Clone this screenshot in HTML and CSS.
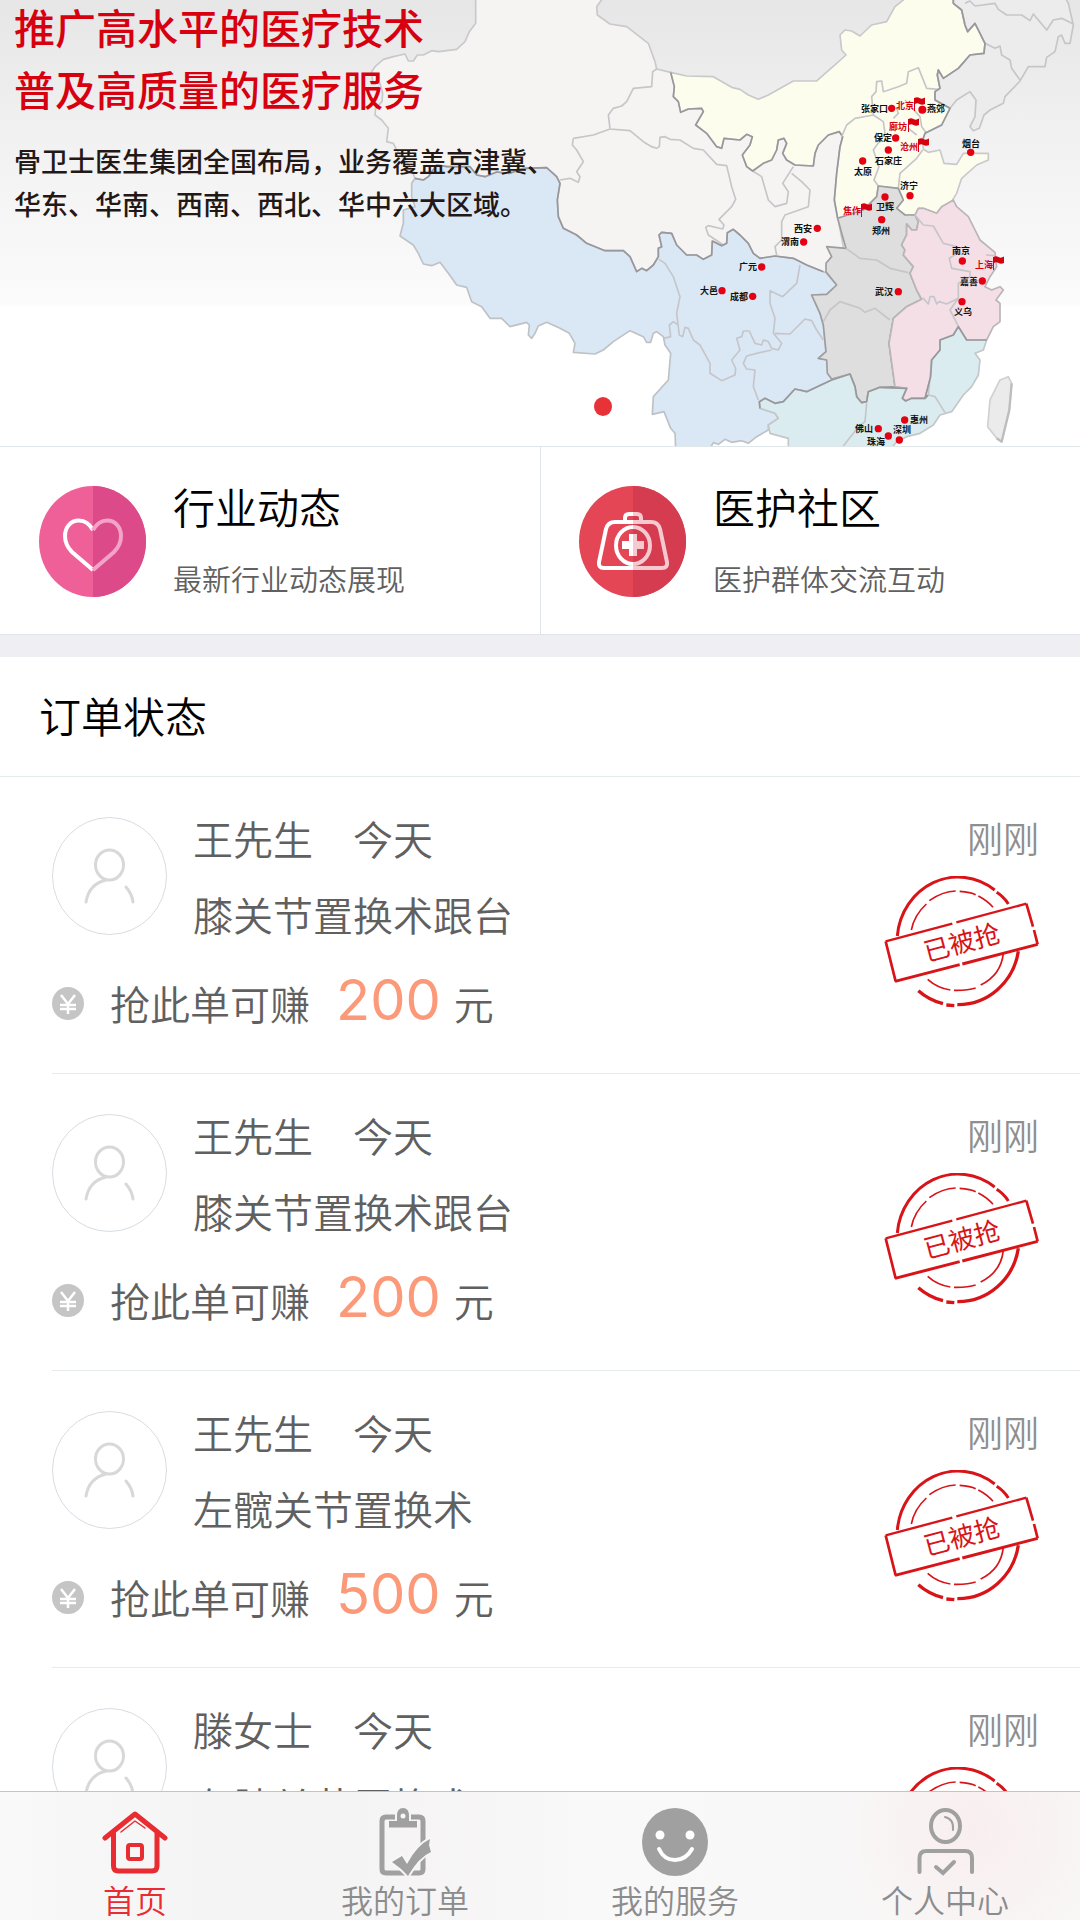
FILE: index.html
```html
<!DOCTYPE html>
<html lang="zh-CN">
<head>
<meta charset="utf-8">
<meta name="viewport" content="width=device-width, initial-scale=1">
<title>首页</title>
<link rel="stylesheet" href="styles.css">
</head>
<body>
<svg class="sprite" aria-hidden="true">
  <defs>
    <symbol id="flag" viewBox="0 0 11 14"><path d="M.5 14V1" stroke="#d7000f" fill="none"/><path d="M.5 1Q3-.5 5.500 1T11 .5V7Q8 8.500 5.500 7T.5 7.500Z" fill="#d7000f"/></symbol>
    <symbol id="avatar" viewBox="0 0 115 118">
      <ellipse cx="57.5" cy="59" rx="57" ry="58.500" fill="#fff" stroke="#d6dde3"/>
      <g fill="none" stroke="#d8d8d8" stroke-width="3" stroke-linecap="round"><ellipse cx="57.500" cy="48" rx="14" ry="15"/><path d="M54 63Q37 67 34 85M74 70Q80 77 81 85"/></g>
    </symbol>
    <symbol id="coin" viewBox="0 0 32 33">
      <ellipse cx="16" cy="16.500" rx="16" ry="16.500" fill="#c6c5c5"/>
      <path d="M9 8l7 9 7-9M16 17v10M8 18h16M8 22h16" fill="none" stroke="#fff" stroke-width="2.500"/>
    </symbol>
    <symbol id="stamp" viewBox="135 288 465 396">
      <g fill="none" stroke="#d81419">
        <path d="M175 468A183 194 0 0 1 467 330M473 337Q494 350 508 372" stroke-width="9"/>
        <path d="M538 514A183 190 0 0 1 355 674M346 677L322 675M312 671Q270 660 238 632" stroke-width="10"/>
        <path d="M217 450Q226 405 262 372M271 362Q310 334 350 333M362 334Q395 336 410 344M418 348Q445 362 462 382" stroke-width="5"/>
        <path d="M493 520Q486 585 425 615M410 624Q385 632 345 631M334 630Q295 624 266 598" stroke-width="5"/>
      </g>
      <path d="M140 484L562 371L596 493L170 604Z" fill="#fff"/>
      <g fill="none" stroke="#d81419"><path d="M140 484L340 431M352 427L562 371" stroke-width="7"/><path d="M562 371L582 440M585 450L596 493M140 484L170 604" stroke-width="8"/><path d="M596 493L370 552M362 554L168 604" stroke-width="9"/></g>
    </symbol>
  </defs>
</svg>

<div class="app">
  <main class="content">
    <section class="banner">
      <svg class="map" viewBox="0 0 1080 446" aria-hidden="true">
        <g stroke-linejoin="round" stroke-width="5" transform="translate(360) scale(.33333)">
          <path class="land" stroke="#c9c9cb" d="M347-8V70L328 95 315 125 290 148 235 155 215 152 190 165 172 165 160 183 145 183 135 162 100 170 70 178 45 200 35 215 38 245 60 250 68 280 66 305 47 325 45 345 65 360 85 385 80 425 100 430 110 450 150 500 165 535 600 700 900 850 1200 800 1398 820 1450 740 1433 650 1448 395 932 217 890 207 885 185 865 130 800 80 750 72 712 45 710 20 730-8Z"/>
          <path class="line" d="M890 207L878 215 875 260 820 265 800 305 785 318 760 325 745 345 750 385M640 415L700 405 750 387 810 392 850 425 875 440 890 445 898 440 900 412 915 410 930 418 960 420 1000 445 1030 450 1070 493 1100 497 1115 560 1127 598 1115 620 1077 658 1092 675 1088 687 1045 677 1037 682 1045 705 1090 735M640 415L637 435 650 450 670 485 650 515 660 530 655 547 630 535 600 540"/>
          <path class="line" d="M1178 513L1205 530 1225 600 1245 620 1280 610 1285 575 1268 550 1300 500M1295 520L1325 545 1350 570 1345 620 1275 645 1265 665 1265 720 1245 740 1250 765"/>
          <path fill="#dae7f5" stroke="#bfc2c5" d="M155 550L155 590 165 620 130 630 130 670 120 708 160 735 175 760 190 792 215 797 240 787 265 820 290 855 320 862 335 905 365 920 390 955 425 955 450 980 500 967 508 975 505 1005 515 1015 525 1000 535 978 560 967 600 985 628 1000 645 1030 640 1057 705 1062 730 1050 760 1025 810 992 850 1010 860 1027 872 1027 880 1000 890 995 910 1010 915 1035 932 1060 925 1140 880 1190 877 1243 912 1235 932 1285 945 1300 947 1345H1050L1060 1328 1075 1333 1095 1318 1115 1327 1145 1322 1165 1330 1190 1310 1225 1290 1225 1275 1255 1255 1245 1240 1200 1225 1200 1205 1215 1195 1245 1210 1270 1205 1305 1167 1340 1175 1415 1140 1405 1080 1375 1075 1398 1055 1390 975 1380 940 1355 885 1400 883 1430 855 1398 818 1340 795 1300 775 1245 768 1200 775 1180 760 1165 730 1140 705 1120 688 1102 698 1100 730 1085 737 1057 723 1055 765 1030 778 1010 765 980 765 950 735 935 700 905 697 897 705 905 740 895 745 895 770 880 795 860 812 845 805 830 815 810 770 790 752 735 752 680 730 650 705 610 685 595 650 592 600 600 550 590 530 560 503 490 505 450 520 410 516 375 530 350 525 330 500 262 500 230 495 205 530 190 540 165 535Z"/>
          <path class="dark" d="M165 535L190 540 205 530 230 495 262 500 330 500 350 525 375 530 410 516 450 520 490 505 560 503 590 530 600 550 592 600 595 650 610 685 650 705 680 730 735 752 790 752 810 770 830 815 845 805 860 812 880 795 895 770 895 745 905 740 897 705 905 697 935 700 950 735 980 765 1010 765 1030 778 1055 765 1057 723 1085 737 1100 730 1102 698 1120 688 1140 705 1165 730 1180 760 1200 775 1245 768 1300 775 1340 795 1390 815"/>
          <path class="line" d="M897 778L915 790 940 830 960 890 950 940 958 1005 968 1010 975 982 985 985 1000 1020 1020 1035 1050 1090 1050 1120 1085 1142 1125 1125 1127 1105 1115 1080 1140 1050 1130 1015 1145 1010 1150 993 1168 993 1185 1030 1205 1035 1210 1020 1225 1025 1235 1045 1255 1050 1265 1030 1240 1000 1245 955 1230 910 1230 872 1268 890 1310 850 1320 795M955 975L940 965 928 975 932 1010 912 1015M1245 1000L1290 1002 1335 957 1355 962 1370 990 1390 1020M1235 1050L1190 1060 1160 1068 1150 1090 1160 1107 1185 1110 1180 1160 1195 1200"/>
          <path fill="#fdfdee" stroke="#c9c9cb" d="M932 217L980 228 1060 230 1115 262 1140 268 1165 285 1195 298 1225 285 1300 243 1370 243 1430 190 1458 165 1445 150 1440 105 1455 90 1475 93 1500 108 1535 75 1580 65 1605 20 1640-8H1780L1780 10 1805 30 1815 75 1823 95 1845 70 1860 100 1875 130 1872 160 1830 165 1795 205 1750 235 1735 210 1732 225 1740 265 1725 275 1725 300 1770 325 1745 375 1695 400 1688 420 1690 448 1705 457 1740 450 1752 490 1790 493 1810 460 1885 460 1885 480 1850 495 1805 535 1790 580 1775 605 1745 620 1730 640 1690 625 1675 625 1665 645 1635 645 1610 625 1630 600 1615 565 1555 558 1550 590 1510 630 1433 655 1423 600 1430 520 1440 440 1448 410 1438 395 1405 405 1375 435 1365 460 1360 498 1305 495 1280 480 1268 460 1280 430 1272 415 1255 420 1250 450 1235 480 1210 490 1178 513 1160 500 1147 465 1170 435 1177 410 1160 403 1140 420 1092 415 1085 445 1070 440 1040 400 1007 375 1030 335 1025 325 985 327 962 337 955 305 940 290 943 260Z"/>
          <path class="dark" d="M932 217L943 260 940 290 955 305 962 337 985 327 1025 325 1030 335 1007 375 1040 400 1070 440 1085 445 1092 415 1140 420 1160 403 1177 410 1170 435 1147 465 1160 500 1178 513 1210 490 1235 480 1250 450 1255 420 1272 415 1280 430 1268 460 1280 480 1305 495 1360 498 1365 460 1375 435 1405 405 1438 395 1448 410 1440 440 1430 520 1423 600 1433 655"/>
        </g>
        <g stroke-linejoin="round" stroke-width="5" transform="translate(740) scale(.33333)">
          <path fill="#ececec" stroke="#c6c6c8" d="M640-8V10L665 30 675 75 683 95 705 70 720 100 735 130 732 160 690 165 655 205 610 235 595 210 592 225 600 265 585 275 585 300 630 325 650 300 690 275 708 300 705 350 690 380 700 392 718 385 732 345 750 330 790 310 795 290 840 243 865 200 915 200 920 172 945 155 955 110 965 105 975 130 990 130 1000 75 985 10 975-8Z"/>
          <path class="line" d="M735 130L765 145 780 138 785 165 810 180 815 205 840 240M675 10L690 3 705 18 765 10 775 28 800 45 845 45 870 62 880 42 920 90 940 60 965 55 1000 72M305 410L320 375 345 355 400 345 430 365 435 400 400 450 417 500 402 540 415 558M400 345L395 290 408 275 410 245 425 243 430 275 475 260 500 250 505 215 535 203 560 265 595 268M475 565L480 520 530 475 548 450M460 355L475 340 470 325M495 300L540 350 545 380 560 400M505 385L530 405"/>
          <path class="dark" d="M640 0V10L665 30 675 75 683 95 705 70 720 100 735 130 732 160 690 165 655 205 610 235 595 210 592 225 600 265 585 275 585 300 630 325 605 375 555 400 548 420"/>
          <path fill="#dedede" stroke="#9d9d9f" d="M415 558L475 565 490 600 470 625 495 645 525 645 535 665 530 690 515 690 500 672 500 705 485 735 495 750 490 765 520 800 510 820 530 870 545 898 500 920 460 955 447 1030 465 1160 420 1162 385 1175 380 1205 365 1208 350 1190 345 1160 330 1122 275 1137 262 1120 260 1080 235 1075 258 1055 250 975 240 940 215 885 260 883 290 855 258 815 258 790 275 770 260 740 318 745 305 700 293 655 370 630 410 590Z"/>
          <path class="line" d="M318 745L360 775 410 780 450 805 505 818M250 965L270 930 300 905 360 925 375 937 405 925 450 960"/>
          <path fill="#f5dfe7" stroke="#b9b5b8" d="M525 645L535 625 550 625 590 640 605 620 640 600 650 620 685 650 720 720 765 757 770 800 750 830 735 860 755 870 780 860 790 870 768 900 780 910 780 965 760 980 740 1020 700 1025 680 1020 655 980 640 1005 600 1020 600 1050 575 1080 572 1130 555 1195 515 1195 497 1203 487 1195 500 1165 465 1160 447 1030 460 955 500 920 545 898 530 870 510 820 520 800 490 765 495 750 485 735 500 705 500 672 515 690 530 690 535 665Z"/>
          <path class="line" d="M525 645L550 675 580 678 610 730 650 740 652 760 628 775 635 805 690 815 690 830 655 850 655 895 620 912 598 905 590 912 582 890 570 890 565 912 548 893M655 895L630 930 648 965 655 980M765 767L738 765"/>
          <path fill="#daecf0" stroke="#c3c7c8" d="M60 1225L58 1205 75 1195 105 1210 130 1205 165 1167 200 1175 275 1140 330 1122 345 1160 350 1190 365 1208 380 1205 385 1175 420 1162 500 1165 487 1195 497 1203 515 1195 555 1195 565 1185 575 1080 600 1050 600 1020 640 1005 655 980 680 1020 740 1020 730 1050 705 1060 720 1080 715 1125 695 1160 670 1185 635 1235 600 1245 580 1275 540 1300 500 1310 470 1325 455 1345H145L145 1315 90 1300 85 1275 115 1255 105 1240Z"/>
          <path class="dark" d="M60 1225L58 1205 75 1195 105 1210 130 1205 165 1167 200 1175 275 1140 330 1122 345 1160 350 1190 365 1208 380 1205 385 1175 420 1162 500 1165 487 1195 497 1203 515 1195 555 1195 565 1185M555 1195L572 1130 575 1080 600 1050 600 1020 640 1005 655 980 680 1020 740 1020"/>
          <path class="line" d="M380 1210L375 1265 355 1280 310 1338M565 1185L585 1190 615 1238"/>
          <path fill="#ebebeb" stroke="#d0d0d0" d="M805 1130L815 1150 808 1230 785 1325 770 1315 743 1280 750 1200 780 1140Z"/>
          <path d="M815 1150L808 1230 785 1325 770 1315" fill="none" stroke="#bdbdbd" stroke-width="7"/>
          <g fill="#e50012">
            <circle cx="455" cy="325" r="11"/><circle cx="547" cy="329" r="12"/><circle cx="467" cy="414" r="11"/><circle cx="445" cy="450" r="11"/><circle cx="368" cy="483" r="11"/><circle cx="692" cy="457" r="11"/><circle cx="510" cy="587" r="11"/><circle cx="435" cy="591" r="11"/><circle cx="425" cy="659" r="11"/><circle cx="232" cy="685" r="11"/><circle cx="191" cy="726" r="11"/><circle cx="65" cy="801" r="11"/><circle cx="38" cy="889" r="11"/><circle cx="-54" cy="872" r="11"/><circle cx="667" cy="783" r="11"/><circle cx="727" cy="843" r="11"/><circle cx="666" cy="905" r="11"/><circle cx="475" cy="875" r="11"/><circle cx="415" cy="1286" r="11"/><circle cx="494" cy="1260" r="11"/><circle cx="478" cy="1320" r="11"/><circle cx="445" cy="1308" r="11"/>
          </g>
        </g>
        <use href="#flag" x="914" y="97" width="11" height="14"/><use href="#flag" x="908" y="118" width="11" height="14"/><use href="#flag" x="918" y="138" width="11" height="14"/><use href="#flag" x="861" y="203" width="11" height="14"/><use href="#flag" x="993" y="256" width="11" height="14"/>
        <g class="city">
          <text x="861" y="112">张家口</text><text x="927" y="112">燕郊</text><text x="874" y="141">保定</text><text x="875" y="164">石家庄</text><text x="854" y="175">太原</text><text x="962" y="147">烟台</text><text x="900" y="189">济宁</text><text x="876" y="210">卫辉</text><text x="872" y="234">郑州</text><text x="794" y="232">西安</text><text x="781" y="245">渭南</text><text x="739" y="270">广元</text><text x="730" y="300">成都</text><text x="700" y="294">大邑</text><text x="952" y="254">南京</text><text x="960" y="285">嘉善</text><text x="954" y="315">义乌</text><text x="875" y="295">武汉</text><text x="855" y="432">佛山</text><text x="910" y="423">惠州</text><text x="893" y="433">深圳</text><text x="867" y="445">珠海</text>
        </g>
        <g class="city city-main">
          <text x="896" y="109">北京</text><text x="889" y="130">廊坊</text><text x="900" y="150">沧州</text><text x="843" y="214">焦作</text><text x="975" y="268">上海</text>
        </g>
      </svg>
      <div class="banner-copy">
        <h1>推广高水平的医疗技术<br>普及高质量的医疗服务</h1>
        <p>骨卫士医生集团全国布局，业务覆盖京津冀、<br>华东、华南、西南、西北、华中六大区域。</p>
      </div>
      <div class="dots"><i></i><i></i><i></i><i class="on"></i></div>
    </section>

    <nav class="entries">
      <a class="entry" href="#news">
        <svg class="entry-icon" viewBox="0 0 107 111" aria-hidden="true">
          <ellipse cx="53.500" cy="55.500" rx="53.500" ry="55.500" fill="#f06098"/><path d="M54 0A53 55.500 0 0 1 54 111Z" fill="#dc4a8a"/>
          <g fill="none" stroke="#fff" stroke-width="4"><path d="M54 44C50 37 45 34.500 40 34.500C31 34.500 26 42 26 50C26 57 29 62 33 66L54 84"/><path d="M54 44C58 37 63 34.500 68 34.500C77 34.500 82 42 82 50C82 57 79 62 75 66L54 84" stroke="#f4a3c8"/></g>
        </svg>
        <span class="entry-text"><strong>行业动态</strong><small>最新行业动态展现</small></span>
      </a>
      <a class="entry" href="#community">
        <svg class="entry-icon" viewBox="0 0 107 111" aria-hidden="true">
          <ellipse cx="53.500" cy="55.500" rx="53.500" ry="55.500" fill="#e54655"/><path d="M54 0A53 55.500 0 0 1 54 111Z" fill="#d63c4f"/>
          <g fill="none" stroke="#fff" stroke-width="4"><path d="M54 36H36Q29 36 27 43L20 76Q19 82 25 82H54M46 36V32Q46 28 50 28H54M54 41A17 18.500 0 0 0 54 78"/><path stroke="#f5c9d0" d="M54 36H72Q79 36 81 43L88 76Q89 82 83 82H54M62 36V32Q62 28 58 28H54M54 41A17 18.500 0 0 1 54 78"/></g>
          <path d="M54 48H50V55H43V63H50V70H54Z" fill="#fff"/><path d="M54 48H58V55H65V63H58V70H54Z" fill="#f5c9d0"/>
        </svg>
        <span class="entry-text"><strong>医护社区</strong><small>医护群体交流互动</small></span>
      </a>
    </nav>

    <section class="orders">
      <h2>订单状态</h2>
      <ul>
        <li class="order">
          <div class="order-head">
            <svg class="avatar" aria-hidden="true"><use href="#avatar"/></svg>
            <div class="order-info"><p>王先生　今天</p><p>膝关节置换术跟台</p></div>
            <div class="order-state"><time>刚刚</time><svg class="stamp" viewBox="0 0 155 132"><use href="#stamp" width="155" height="132"/><text x="78" y="76" transform="rotate(-15 78 67)">已被抢</text></svg></div>
          </div>
          <p class="reward"><svg class="coin" aria-hidden="true"><use href="#coin"/></svg><span>抢此单可赚</span><b>200</b><span>元</span></p>
        </li>
        <li class="order">
          <div class="order-head">
            <svg class="avatar" aria-hidden="true"><use href="#avatar"/></svg>
            <div class="order-info"><p>王先生　今天</p><p>膝关节置换术跟台</p></div>
            <div class="order-state"><time>刚刚</time><svg class="stamp" viewBox="0 0 155 132"><use href="#stamp" width="155" height="132"/><text x="78" y="76" transform="rotate(-15 78 67)">已被抢</text></svg></div>
          </div>
          <p class="reward"><svg class="coin" aria-hidden="true"><use href="#coin"/></svg><span>抢此单可赚</span><b>200</b><span>元</span></p>
        </li>
        <li class="order">
          <div class="order-head">
            <svg class="avatar" aria-hidden="true"><use href="#avatar"/></svg>
            <div class="order-info"><p>王先生　今天</p><p>左髋关节置换术</p></div>
            <div class="order-state"><time>刚刚</time><svg class="stamp" viewBox="0 0 155 132"><use href="#stamp" width="155" height="132"/><text x="78" y="76" transform="rotate(-15 78 67)">已被抢</text></svg></div>
          </div>
          <p class="reward"><svg class="coin" aria-hidden="true"><use href="#coin"/></svg><span>抢此单可赚</span><b>500</b><span>元</span></p>
        </li>
        <li class="order">
          <div class="order-head">
            <svg class="avatar" aria-hidden="true"><use href="#avatar"/></svg>
            <div class="order-info"><p>滕女士　今天</p><p>左膝关节置换术</p></div>
            <div class="order-state"><time>刚刚</time><svg class="stamp" viewBox="0 0 155 132"><use href="#stamp" width="155" height="132"/></svg></div>
          </div>
        </li>
      </ul>
    </section>
  </main>

  <nav class="tabs">
    <a class="tab active" href="#home">
      <svg viewBox="0 0 66 68" fill="none" stroke="currentColor" stroke-linecap="round" stroke-linejoin="round" aria-hidden="true"><path d="M3 30L33 6L63 30M11.500 25V58Q11.500 63 16.500 63H50Q55 63 55 58V25" stroke-width="5"/><rect x="26" y="37" width="14" height="14" rx="2" stroke-width="4"/><path d="M19 24L33 13L43 20" stroke-width="1.500"/></svg>
      <span>首页</span>
    </a>
    <a class="tab" href="#orders">
      <svg viewBox="0 0 66 68" aria-hidden="true"><path d="M23 9H14Q10 9 10 13V61Q10 65 14 65H47Q51 65 51 61V13Q51 9 47 9H39" fill="none" stroke="currentColor" stroke-width="5"/><path d="M17 13H25V8Q25 0 31 0T37 8V13H45V19.500H17Z" fill="currentColor"/><circle cx="31" cy="8" r="2.500" fill="#f7f7f7"/><path d="M20 54L30 48 35 56Q45 37 58 31L57 37 59 44Q47 49 36 68Q29 60 20 54Z" fill="currentColor" stroke="#f7f7f7" stroke-width="4" paint-order="stroke"/></svg>
      <span>我的订单</span>
    </a>
    <a class="tab" href="#services">
      <svg viewBox="0 0 66 68" aria-hidden="true"><ellipse cx="33" cy="34" rx="33" ry="34" fill="currentColor"/><circle cx="18" cy="27" r="4.500" fill="#fff"/><circle cx="48" cy="27" r="4.500" fill="#fff"/><path d="M17 41Q22 52 33 52T50 41" fill="none" stroke="#fff" stroke-width="4" stroke-linecap="round"/></svg>
      <span>我的服务</span>
    </a>
    <a class="tab" href="#me">
      <svg viewBox="0 0 66 68" fill="none" stroke="currentColor" stroke-width="4" stroke-linecap="round" aria-hidden="true"><ellipse cx="33.500" cy="18" rx="14.500" ry="16"/><path d="M7.500 64V50Q7.500 43 14.500 43H53Q60 43 60 50V64M24 59L31 65L42 54"/><path d="M33 9Q42 11 41 22" stroke-width="2"/></svg>
      <span>个人中心</span>
    </a>
  </nav>
</div>
</body>
</html>
```

FILE: styles.css
```css
* { box-sizing: border-box; }

body, h1, h2, p, ul { margin: 0; padding: 0; }

body {
  background: #fff;
  color: #606060;
  font-family: "Noto Sans CJK SC", sans-serif;
  font-weight: 350;
}

ul { list-style: none; }
a { color: inherit; text-decoration: none; }
svg { display: block; flex: none; }
.sprite { position: absolute; width: 0; height: 0; }

.app {
  display: flex;
  flex-direction: column;
  height: 100vh;
}

.content {
  flex: 1;
  min-height: 0;
  overflow-y: auto;
  scrollbar-width: none;
}

/* Banner */
.banner {
  position: relative;
  display: flow-root;
  aspect-ratio: 1080 / 446;
  overflow: hidden;
  background: linear-gradient(#e6e6e6, #f1f1f1 30%, #fbfbfb 68%, #fff 69%);
}

.map {
  position: absolute;
  inset: 0;
  width: 100%;
  height: 100%;
}

.map .land { fill: #f5f4f2; }
.map .line { fill: none; stroke: #c6c6ca; stroke-width: 5; }
.map .dark { fill: none; stroke: #98989c; stroke-width: 5; }
.city { fill: #111; font-size: 9px; font-weight: 700; }
.city-main { fill: #d7000f; }

.banner-copy {
  position: relative;
  margin-top: -5px;
  padding-left: 14px;
}

.banner-copy h1 {
  color: #d7000f;
  font-size: 41px;
  font-weight: 500;
  line-height: 62px;
}

.banner-copy p {
  margin-top: 20px;
  color: #231815;
  font-size: 27px;
  font-weight: 500;
  line-height: 43px;
}

.dots {
  position: absolute;
  right: 0;
  bottom: 30px;
  left: 0;
  display: flex;
  justify-content: center;
  gap: 24px;
}

.dots i {
  width: 18px;
  height: 19px;
  border-radius: 50%;
  background: #fff;
}

.dots .on { background: #e73237; }

/* Entries */
.entries {
  display: grid;
  grid-template-columns: 1fr 1fr;
  border-top: 1px solid #dfe6e9;
  border-bottom: 1px solid #dfe6e9;
}

.entry {
  display: flex;
  align-items: center;
  gap: 27px;
  padding: 27px 39px 26px;
}

.entry + .entry { padding-left: 38px; border-left: 1px solid #dfe6e9; }
.entry-icon { width: 107px; height: 111px; }

.entry-text {
  display: flex;
  flex-direction: column;
  gap: 15px;
  padding-bottom: 5px;
}

.entry strong {
  color: #000;
  font-size: 42px;
  font-weight: 350;
  line-height: 64px;
}

.entry small {
  font-size: 29px;
  line-height: 50px;
}

/* Orders */
.orders { border-top: 22px solid #eeeef3; }

.orders h2 {
  padding: 0 39px 4px;
  border-bottom: 1px solid #e5eaed;
  color: #000;
  font-size: 42px;
  font-weight: 350;
  line-height: 115px;
}

.order {
  margin-left: 52px;
  padding: 37px 41px 43px 0;
  border-bottom: 1px solid #e5eaed;
}

.order-head {
  display: flex;
  height: 124px;
}

.avatar { width: 115px; height: 118px; margin-top: 3px; }

.order-info {
  display: flex;
  flex: 1;
  flex-direction: column;
  gap: 28px;
  padding-left: 26px;
  font-size: 40px;
  line-height: 48px;
}

.order-state {
  display: flex;
  flex-direction: column;
  align-items: flex-end;
  gap: 16px;
}

.order-state time {
  color: #8f8f8f;
  font-size: 36px;
  line-height: 46px;
}

.stamp { width: 155px; height: 132px; }

.stamp text {
  fill: #d81419;
  font-size: 26px;
  font-weight: 400;
  text-anchor: middle;
}

.reward {
  display: flex;
  align-items: baseline;
  height: 60px;
  margin-top: 32px;
  font-size: 40px;
  line-height: 60px;
}

.coin {
  width: 32px;
  height: 33px;
  margin-right: 26px;
}

.reward b {
  margin: 0 13px 0 26px;
  color: #fb9978;
  font-family: Inter, sans-serif;
  font-size: 56px;
  font-weight: 400;
}

/* Tab bar */
.tabs {
  display: grid;
  grid-template-columns: repeat(4, 1fr);
  border-top: 1px solid #c4c4c4;
  background: radial-gradient(circle at 90% 30%, #f9eeef, transparent 14%), linear-gradient(90deg, #f9f9f9, #f4f4f4 20%, #f6f4f4 38%, #f9f9f9 55%, #f8f6f6);
}

.tab {
  display: flex;
  flex-direction: column;
  align-items: center;
  gap: 4px;
  padding: 16px 0 2px;
  color: #8c8c8c;
  font-size: 32px;
  line-height: 38px;
}

.tab svg {
  width: 66px;
  height: 68px;
  color: #a0a0a0;
}

.tab.active, .tab.active svg { color: #e82c31; }
```
